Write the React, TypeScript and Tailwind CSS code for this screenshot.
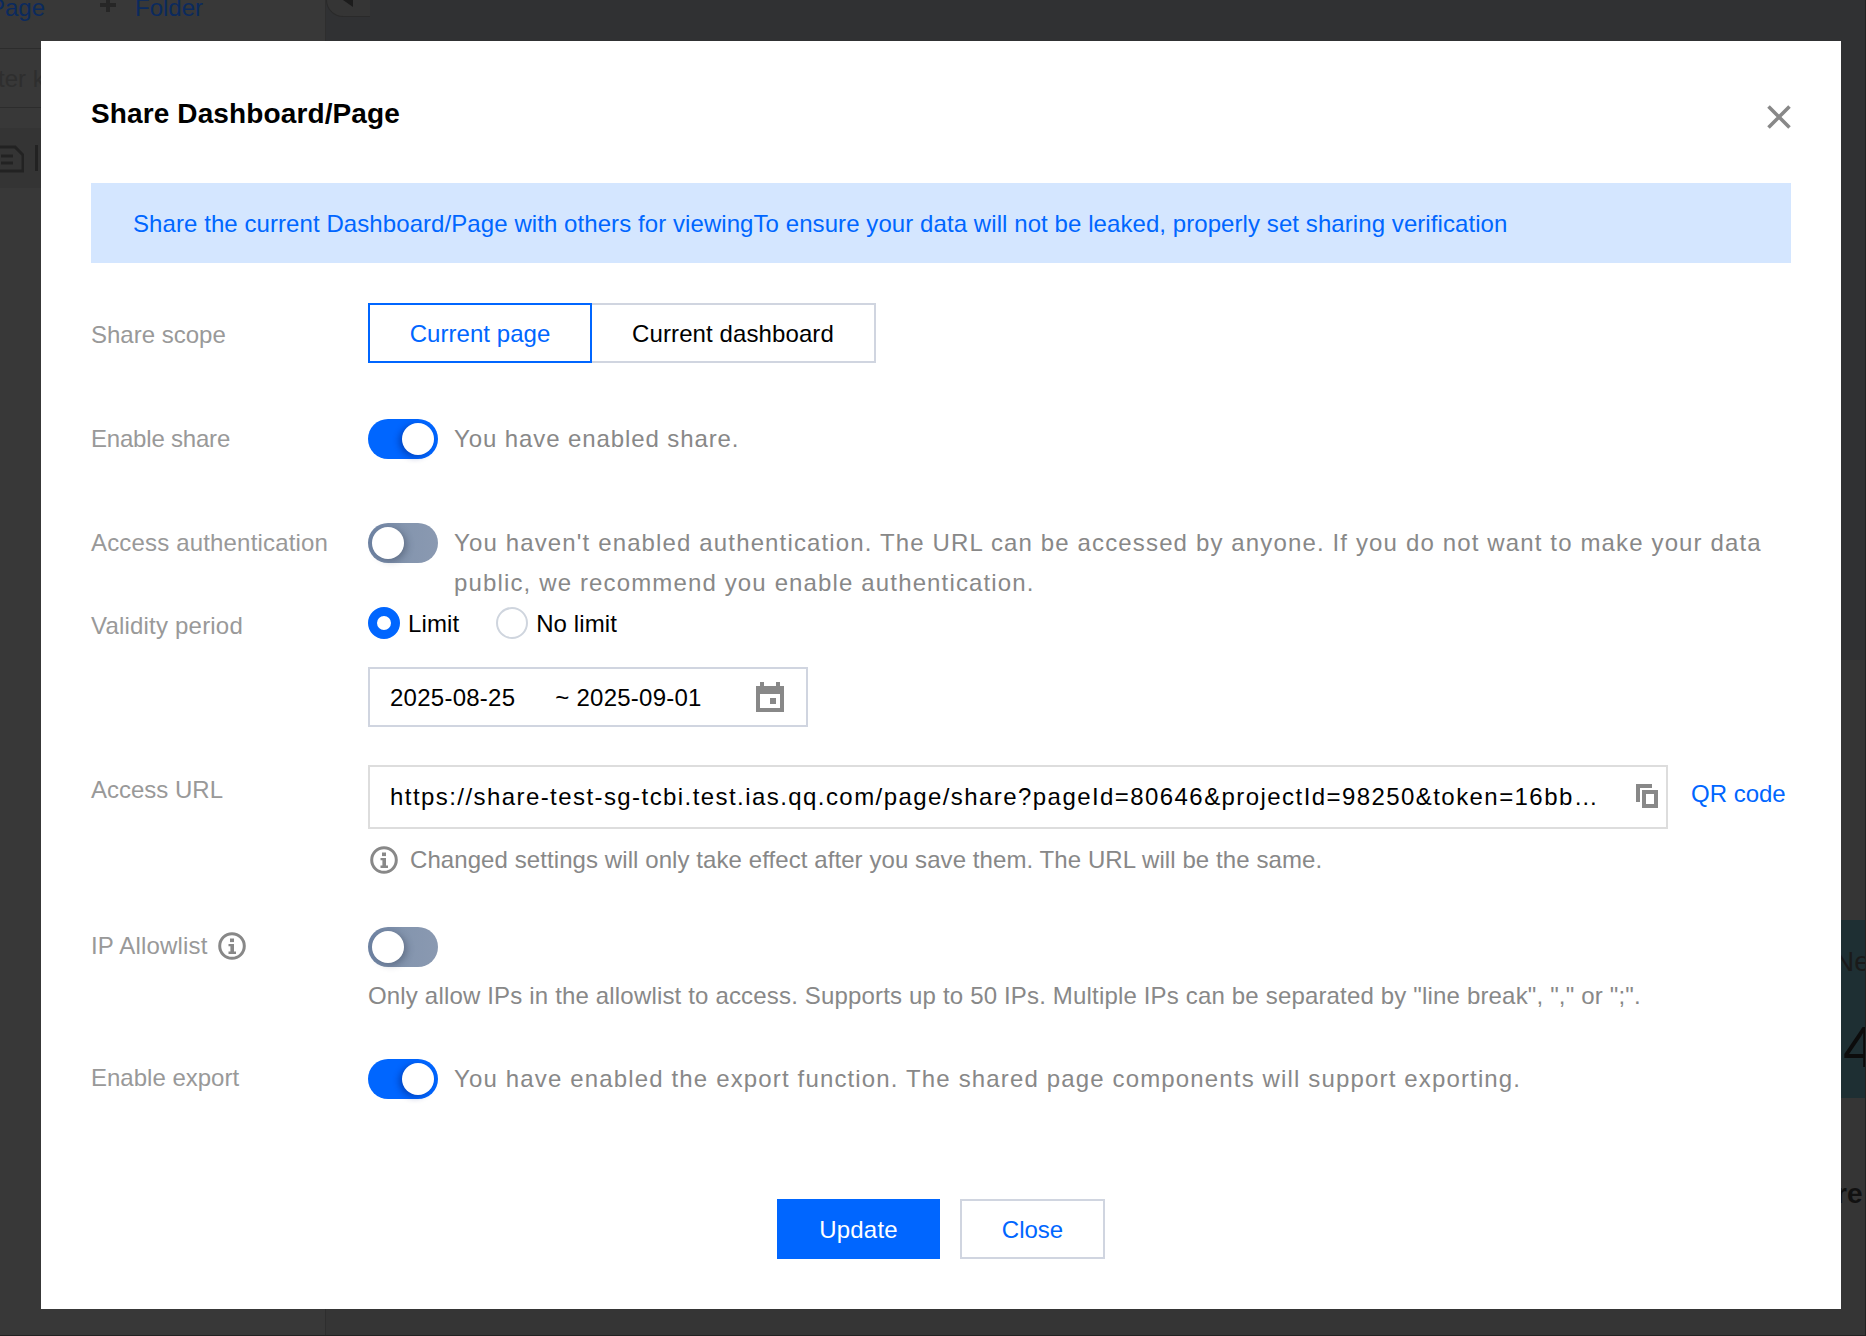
import type { ReactNode } from "react";

// dimmed page behind the dialog: only slivers of it show around the modal
function BackdropPage() {
  return (
    <div className="absolute inset-0 overflow-hidden border-b border-r border-[#222] bg-[#353535] text-[24px]">
      <div className="absolute left-[326px] top-0 h-[660px] w-[1540px] bg-[#303133]" />
      <div className="absolute left-0 top-0 h-full w-[326px] border-r border-[#2e2e2e] bg-[#383838]" />
      <div className="absolute left-[326px] top-0 h-[17px] w-[44px] rounded-bl-[18px] border-b border-l border-[#2a2a2a] bg-[#353535]" />
      <svg className="absolute left-[343px] top-0" width="10" height="7" viewBox="0 0 10 7">
        <path fill="#1c1c1c" d="M0 0H10V7Z" />
      </svg>
      <div className="absolute left-[-11px] top-[-12px] text-[#0b2a5e]">Page</div>
      <div className="absolute left-[100px] top-[3px] h-[4px] w-[16px] bg-[#262626]" />
      <div className="absolute left-[106px] top-0 h-[12px] w-[4px] bg-[#262626]" />
      <div className="absolute left-[135px] top-[-12px] text-[#0b2a5e]">Folder</div>
      <div className="absolute left-0 top-[48px] h-px w-[326px] bg-[#2c2c2c]" />
      <div className="absolute left-0 top-[107px] h-px w-[326px] bg-[#2c2c2c]" />
      <div className="absolute left-[-2px] top-[59px] text-[#2e2e2e]">ter k</div>
      <div className="absolute left-0 top-[128px] h-[60px] w-[326px] bg-[#343434]" />
      <svg className="absolute left-0 top-[145px]" width="24" height="28" viewBox="0 0 24 28" fill="none" stroke="#222" strokeWidth="3">
        <path d="M-4 2H15L23 10V26H-4" />
        <path d="M1 11H13M1 18H13" />
      </svg>
      <div className="absolute left-[35px] top-[145px] h-[26px] w-[3px] bg-[#222]" />
      <div className="absolute left-[1841px] top-[920px] h-[178px] w-[25px] bg-[#1e2f33]" />
      <div className="absolute left-[1834px] top-[942px] text-[28px] text-[#1a1a1a]">Ne</div>
      <div className="absolute left-[1843px] top-[1018px] text-[58px] leading-none text-[#0c0c0c]">4</div>
      <div className="absolute left-[1836px] top-[1174px] text-[28px] font-bold text-[#111]">re</div>
      <div className="absolute left-[1457px] top-[1325px] text-[#1a1a1a]">25400</div>
    </div>
  );
}

function Row({ label, className, children }: { label: ReactNode; className?: string; children: ReactNode }) {
  return (
    <div className={`flex ${className ?? ""}`}>
      <div className="w-[277px] shrink-0 text-[#999]">{label}</div>
      <div className="min-w-0 flex-1">{children}</div>
    </div>
  );
}

function Toggle({ on }: { on: boolean }) {
  return (
    <span
      className={`flex h-[40px] w-[70px] shrink-0 items-center rounded-full px-[4px] ${
        on ? "justify-end bg-[#0066ff]" : "justify-start bg-linear-to-r from-[#6e83a3] via-[#8495ae] to-[#8a99b1]"
      }`}
    >
      <span
        className={`h-[32px] w-[32px] rounded-full bg-white ${
          on ? "shadow-[-3px_2px_6px_rgba(0,30,120,0.45)]" : "shadow-[3px_2px_7px_rgba(40,50,70,0.35)]"
        }`}
      />
    </span>
  );
}

function Radio({ on, label }: { on: boolean; label: string }) {
  return (
    <span className="flex h-[40px] items-center gap-[8px] tracking-[0.1px] text-black">
      {on ? (
        <span className="h-[32px] w-[32px] rounded-full border-[9px] border-[#0066ff] bg-white" />
      ) : (
        <span className="h-[32px] w-[32px] rounded-full border-2 border-[#cfd5de] bg-white" />
      )}
      <span className="pt-px">{label}</span>
    </span>
  );
}

function InfoIcon() {
  return (
    <svg width="28" height="28" viewBox="0 0 28 28" fill="none" className="shrink-0">
      <circle cx="14" cy="14" r="12.3" stroke="#888" strokeWidth="3" />
      <rect x="12" y="6.5" width="4" height="3.6" fill="#888" />
      <path d="M10.5 12H16V19.6H18V22H10.5V19.6H12.4V14.2H10.5Z" fill="#888" />
    </svg>
  );
}

export default function App() {
  return (
    <div className="relative h-[1336px] w-[1866px] overflow-hidden font-['Liberation_Sans',Arial,sans-serif] text-[24px] leading-[40px]">
      <BackdropPage />
      <div className="absolute left-[41px] top-[41px] h-[1268px] w-[1800px] bg-white px-[50px]">
        <div className="flex h-[142px] justify-between pt-[53px]">
          <h2 className="text-[28px] font-bold leading-[40px] tracking-[0.12px] text-black">Share Dashboard/Page</h2>
          <svg width="24" height="24" viewBox="0 0 24 24" className="mt-[11px]" fill="none" stroke="#888" strokeWidth="3.6">
            <path d="M1.5 1.5L22.5 22.5M22.5 1.5L1.5 22.5" />
          </svg>
        </div>

        <div className="flex h-[80px] items-center bg-[#d4e6ff] px-[42px] pt-[2px] tracking-[0.075px] text-[#0066ff]">
          Share the current Dashboard/Page with others for viewingTo ensure your data will not be leaked, properly set sharing verification
        </div>

        <Row label={<span className="block pt-[12px]">Share scope</span>} className="mt-[40px]">
          <div className="flex h-[60px]">
            <span className="flex w-[224px] items-center justify-center border-2 border-[#0066ff] pt-[2px] tracking-[0.05px] text-[#0066ff]">Current page</span>
            <span className="flex w-[284px] items-center justify-center border-2 border-l-0 border-[#d0d5e0] pt-[2px] tracking-[0.1px] text-black">Current dashboard</span>
          </div>
        </Row>

        <Row label={<span className="block tracking-[-0.2px]">Enable share</span>} className="mt-[56px]">
          <div className="flex items-center gap-[16px] tracking-[0.9px] text-[#888]">
            <Toggle on />
            You have enabled share.
          </div>
        </Row>

        <Row label={<span className="block tracking-[0.17px]">Access authentication</span>} className="mt-[64px]">
          <div className="flex items-start gap-[16px] tracking-[1.14px] text-[#888]">
            <Toggle on={false} />
            <span>
              You haven't enabled authentication. The URL can be accessed by anyone. If you do not want to make your data public, we recommend you enable authentication.
            </span>
          </div>
        </Row>

        <Row label={<span className="mt-[3px] block tracking-[0.2px]">Validity period</span>}>
          <div className="flex gap-[37px]">
            <Radio on label="Limit" />
            <Radio on={false} label="No limit" />
          </div>
          <div className="mt-[24px] flex h-[60px] w-[440px] items-center justify-between border-2 border-[#d0d5e0] pl-[20px] pr-[22px] tracking-[0.25px] text-black">
            <span className="pt-px">
              2025-08-25<span className="ml-[40px]">~ 2025-09-01</span>
            </span>
            <svg width="28" height="30" viewBox="0 0 28 30">
              <path
                fill="#888"
                fillRule="evenodd"
                d="M4 0H8V4H20V0H24V4H28V30H0V4H4ZM4 12V26H24V12ZM14 16H20V22H14Z"
              />
            </svg>
          </div>
        </Row>

        <Row label={<span className="block pt-[5px]">Access URL</span>} className="mt-[38px]">
          <div className="flex items-start">
            <div className="flex h-[64px] w-[1300px] items-center border-2 border-[#ddd] pl-[20px] pr-[8px] tracking-[1.43px] text-black">
              <span className="w-[1212px] truncate">
                https://share-test-sg-tcbi.test.ias.qq.com/page/share?pageId=80646&amp;projectId=98250&amp;token=16bb7c2e
              </span>
              <svg width="22" height="24" viewBox="0 0 22 24" className="ml-auto mt-[-2px]">
                <path fill="#888" d="M0 0H16V4H4V18H0Z" />
                <path fill="#888" fillRule="evenodd" d="M6 6H22V24H6ZM10 10V20H18V10Z" />
              </svg>
            </div>
            <span className="ml-[23px] mt-[9px] text-[#0066ff]">QR code</span>
          </div>
          <div className="mt-[11px] flex items-center gap-[12px] pl-[2px] tracking-[0.08px] text-[#888]">
            <InfoIcon />
            Changed settings will only take effect after you save them. The URL will be the same.
          </div>
        </Row>

        <Row
          label={
            <span className="mt-[-1px] flex items-center gap-[10px] tracking-[0.2px]">
              IP Allowlist
              <InfoIcon />
            </span>
          }
          className="mt-[47px]"
        >
          <Toggle on={false} />
          <p className="mt-[9px] tracking-[0.17px] text-[#888]">
            Only allow IPs in the allowlist to access. Supports up to 50 IPs. Multiple IPs can be separated by "line break", "," or ";".
          </p>
        </Row>

        <Row label={<span className="mt-[-1px] block">Enable export</span>} className="mt-[43px]">
          <div className="flex items-center gap-[16px] tracking-[1.15px] text-[#888]">
            <Toggle on />
            You have enabled the export function. The shared page components will support exporting.
          </div>
        </Row>

        <div className="mt-[100px] flex justify-center gap-[20px]">
          <button className="h-[60px] w-[163px] bg-[#0066ff] pt-[2px] tracking-[0.2px] text-white">Update</button>
          <button className="h-[60px] w-[145px] border-2 border-[#d0d5e0] pt-[2px] text-[#0066ff]">Close</button>
        </div>
      </div>
    </div>
  );
}
